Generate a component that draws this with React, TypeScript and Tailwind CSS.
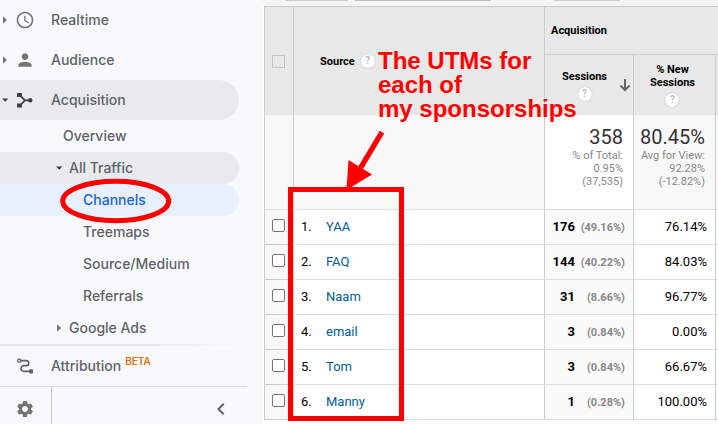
import type { ReactNode } from 'react'
import { MdAccessTime, MdPerson, MdSettings, MdChevronLeft } from 'react-icons/md'

const rows = [
  { source: 'YAA', sessions: '176', share: '49.16%', fresh: '76.14%' },
  { source: 'FAQ', sessions: '144', share: '40.22%', fresh: '84.03%' },
  { source: 'Naam', sessions: '31', share: '8.66%', fresh: '96.77%' },
  { source: 'email', sessions: '3', share: '0.84%', fresh: '0.00%' },
  { source: 'Tom', sessions: '3', share: '0.84%', fresh: '66.67%' },
  { source: 'Manny', sessions: '1', share: '0.28%', fresh: '100.00%' },
]

function Caret({ open = false }: { open?: boolean }) {
  return (
    <svg viewBox="0 0 8 8" className={`size-2 shrink-0 ${open ? 'text-[#3c4043]' : 'text-[#757575]'}`} fill="currentColor">
      {open ? <path d="M1 2.5h6.4L4.2 5.7z" /> : <path d="M2 .2v7.6L6 4z" />}
    </svg>
  )
}

function AcquisitionIcon() {
  return (
    <svg viewBox="0 0 16 16" className="size-4" fill="#3c4043">
      <rect x="0" y="1" width="5" height="4" />
      <rect x="0" y="11.5" width="5" height="4" />
      <path d="M3 3.3l5 5-5 5M8 8.3h5" stroke="#3c4043" strokeWidth="1.7" fill="none" />
      <circle cx="13.2" cy="8.3" r="2.2" />
    </svg>
  )
}

function AttributionIcon() {
  return (
    <svg viewBox="0 0 16 16" className="size-4" fill="none" stroke="#5f6368" strokeWidth="1.7">
      <rect x="0.8" y="1.1" width="3" height="3" rx="0.8" strokeWidth="1.4" />
      <path d="M3.8 2.7h5.4a2.5 2.5 0 0 1 0 5H6.8a2.8 2.8 0 0 0 0 5.6H13" />
      <rect x="12.2" y="11.2" width="3.8" height="4.2" rx="0.6" fill="#5f6368" stroke="none" />
    </svg>
  )
}

function SortArrow() {
  return (
    <svg viewBox="0 0 16 16" className="ml-2.5 size-4" fill="none" stroke="#666" strokeWidth="2">
      <path d="M8 2v11M3.5 8.5L8 13l4.500-4.500" />
    </svg>
  )
}

function MainItem({ icon, children, open }: { icon: ReactNode; children: ReactNode; open?: boolean }) {
  return (
    <a href="#" className={`mr-6 flex h-10 items-center rounded-r-full ${open ? 'bg-[#e8eaed]' : ''}`}>
      <span className="ml-px flex w-12 shrink-0 items-center">
        <Caret open={open} />
        <span className="ml-2 flex w-4 justify-center text-[#757575]">{icon}</span>
      </span>
      <span className="ml-0.5">{children}</span>
    </a>
  )
}

function Help() {
  return (
    <button
      type="button"
      aria-label="Help"
      className="inline-flex size-3.5 items-center justify-center rounded-full bg-white text-[10px] leading-none font-bold text-[#bdbdbd] shadow-[0_0_1px_#999]"
    >
      ?
    </button>
  )
}

function Sidebar() {
  return (
    <nav className="w-[263px] shrink-0 bg-[#f8f9fb] font-[Inter,sans-serif] text-sm font-medium text-[#5f6368]">
      <MainItem icon={<MdAccessTime className="size-5 shrink-0" />}>Realtime</MainItem>
      <MainItem icon={<MdPerson className="size-5 shrink-0" />}>Audience</MainItem>
      <MainItem icon={<AcquisitionIcon />} open>Acquisition</MainItem>
      <a href="#" className="mr-6 flex h-8 items-center pl-[63px]">Overview</a>
      <a href="#" className="mr-6 flex h-8 items-center gap-1.5 rounded-r-full bg-[#e8eaed] pl-[55px]">
        <Caret open />
        All Traffic
      </a>
      <a href="#" className="relative mr-6 flex h-8 items-center rounded-r-full bg-[#e8f0fe] pl-[83px] text-[#1967d2]">
        Channels
        {/* red circle round the selected report */}
        <svg viewBox="0 0 112 46" className="absolute -top-1 left-15 h-[46px] w-28 overflow-visible" fill="none">
          <ellipse cx="55.7" cy="21" rx="53" ry="19.7" stroke="#f00" strokeWidth="5" />
        </svg>
      </a>
      <a href="#" className="flex h-8 items-center pl-[83px]">Treemaps</a>
      <a href="#" className="flex h-8 items-center pl-[83px]">Source/Medium</a>
      <a href="#" className="flex h-8 items-center pl-[83px]">Referrals</a>
      <a href="#" className="flex h-8 items-center gap-1.5 pl-[55px]">
        <Caret />
        Google Ads
      </a>
      <div className="mr-4 h-0.5 bg-linear-to-r from-[#e4e6e9] via-[#e4e6e9] to-[#f8f9fb]" />
      <a href="#" className="flex h-10 items-center">
        <span className="ml-[17px] w-[34px]"><AttributionIcon /></span>
        Attribution
        <sup className="ml-1 text-[10px] leading-none font-semibold text-[#e8710a]">BETA</sup>
      </a>
      <div className="mr-4 flex h-11 border-t border-[#dadce0]">
        <button type="button" aria-label="Admin" className="flex w-[52px] items-center border-r border-[#c8cacd] pl-[15px]">
          <MdSettings className="size-5 text-[#757575]" />
        </button>
        <button type="button" aria-label="Collapse menu" className="mr-3.5 ml-auto">
          <MdChevronLeft className="size-6 text-[#5f6368]" />
        </button>
      </div>
    </nav>
  )
}

function ReportTable() {
  return (
    <table className="w-full table-fixed border-separate border-spacing-0 border-t border-l border-[#ccc] text-[13px] text-black">
      <colgroup>
        <col className="w-7" />
        <col />
        <col className="w-[89px]" />
        <col className="w-[82px]" />
        <col className="w-[3px]" />
      </colgroup>
      <thead className="bg-[#e8e8e8] text-[11px] leading-[13px]">
        <tr>
          <th rowSpan={2} className="p-0">
            <input type="checkbox" aria-label="Select all" className="ml-[7px] block size-[13px] appearance-none border border-[#c4c4c4]" />
          </th>
          <th rowSpan={2} className="border-l border-[#ccc] pl-[26px] text-left">
            <span className="flex items-center gap-1.5">Source <Help /></span>
          </th>
          <th colSpan={3} className="h-12 border-b border-l border-[#ccc] pl-1.5 text-left">Acquisition</th>
        </tr>
        <tr>
          <th className="h-[60px] border-l border-[#ccc] p-0">
            <span className="flex items-center justify-end">
              <span className="flex flex-col items-center gap-1">Sessions <Help /></span>
              <SortArrow />
            </span>
          </th>
          <th className="border-l border-[#ccc] py-0 pr-1 pl-0">
            <span className="flex flex-col items-center gap-1">
              <span>% New<br />Sessions</span>
              <Help />
            </span>
          </th>
          <th className="border-l border-[#ccc] p-0" />
        </tr>
      </thead>
      <tbody>
        <tr className="bg-[#f8f8f8] text-right align-top">
          <td className="h-[95px] border-b border-[#ddd] p-0" />
          <td className="border-b border-l border-b-[#ddd] border-l-[#ccc] p-0" />
          <td className="border-b border-l border-b-[#ddd] border-l-[#ccc] bg-white py-2.5 pr-2.5 pl-0">
            <div className="text-xl leading-6 text-[#333]">358</div>
            <div className="text-[11px] leading-[13px] text-[#888]">% of Total:<br />0.95%<br />(37,535)</div>
          </td>
          <td className="border-b border-l border-b-[#ddd] border-l-[#ccc] py-2.5 pr-2.5 pl-0">
            <div className="text-xl leading-6 text-[#333]">80.45%</div>
            <div className="text-[11px] leading-[13px] text-[#888]">Avg for View:<br />92.28%<br />(-12.82%)</div>
          </td>
          <td className="border-b border-l border-b-[#ddd] border-l-[#ccc] p-0" />
        </tr>
        {rows.map((row, i) => (
          <tr key={row.source} className="bg-white">
            <td className="h-[35px] border-b border-[#ccc] bg-[#f8f8f8] px-0 pt-0 pb-1">
              <input type="checkbox" aria-label={`Select ${row.source}`} className="ml-[7px] block size-[13px] appearance-none rounded-xs border border-[#767676] bg-white" />
            </td>
            <td className="border-b border-l border-b-[#ddd] border-l-[#ccc] py-0 pr-0 pl-[7px]">
              <span className="flex">
                <span className="w-[25px]">{i + 1}.</span>
                <a href="#" className="text-[#005c9c]">{row.source}</a>
              </span>
            </td>
            <td className="border-b border-l border-b-[#ddd] border-l-[#ccc] bg-[#fafafa] py-0 pr-2 pl-0">
              <span className="flex items-baseline font-bold">
                <span className="w-[30px] flex-1 text-right">{row.sessions}</span>
                <span className="w-[50px] text-right text-[11px] text-[#888]">({row.share})</span>
              </span>
            </td>
            <td className="border-b border-l border-b-[#ddd] border-l-[#ccc] py-0 pr-2 pl-0 text-right">{row.fresh}</td>
            <td className="border-b border-l border-b-[#ddd] border-l-[#ccc] p-0" />
          </tr>
        ))}
      </tbody>
    </table>
  )
}

export default function App() {
  return (
    <div className="flex h-screen overflow-hidden bg-white font-[Roboto,sans-serif]">
      <Sidebar />
      <main className="relative min-w-0 flex-1">
        {/* lower edges of the toolbar controls */}
        <div className="flex h-1.5 bg-[#f5f5f5] pl-[22px]">
          <div className="h-px w-[63px] bg-[#ccc]" />
          <div className="ml-[7px] h-px w-[136px] bg-[#bbb]" />
          <div className="ml-[63px] h-px w-[66px] bg-[#ccc]" />
        </div>
        <div className="pl-px">
          <ReportTable />
        </div>

        {/* annotation over the table */}
        <p className="pointer-events-none absolute top-[49px] left-[115px] font-['Liberation_Sans',sans-serif] text-2xl leading-6 font-bold whitespace-nowrap text-[#f00]">
          The UTMs for<br />each of<br />my sponsorships
        </p>
        <svg viewBox="0 0 42 60" className="pointer-events-none absolute top-[130px] left-[82px] h-[60px] w-[42px]" fill="#f00">
          <path d="M34.7.8l4.5 2.7L18 39l-4.6-2.8z" />
          <path d="M3.5 30L27 44.5 1.5 60z" />
        </svg>
        <div className="pointer-events-none absolute top-[187px] left-[25px] h-[234px] w-[116px] border-5 border-[#f00]" />
      </main>
    </div>
  )
}
